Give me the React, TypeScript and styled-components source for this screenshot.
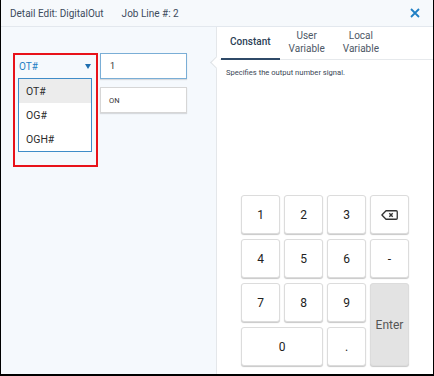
import React from "react";
import styled, { createGlobalStyle } from "styled-components";

const Global = createGlobalStyle`
  html, body { margin: 0; padding: 0; background: #fff; }
  body { font-family: Roboto, "Liberation Sans", sans-serif; }
  * { box-sizing: border-box; }
`;

const Frame = styled.div`
  width: 434px;
  height: 376px;
  display: flex;
  flex-direction: column;
  border-left: 1px solid #000;
  border-right: 1px solid #000;
  border-bottom: 2px solid #000;
  background: #f6f9fc;
  overflow: hidden;
`;

const Header = styled.div`
  height: 27px;
  flex: none;
  display: flex;
  align-items: center;
  padding: 0 0 0 9px;
  border-bottom: 1px solid #e3e8ee;
  color: #3d4b5c;
  font-size: 10px;
`;

const HeaderItem = styled.span<{ $gap?: number }>`
  margin-right: ${(p) => p.$gap ?? 0}px;
`;

const Close = styled.button`
  margin-left: auto;
  margin-right: 12px;
  width: 12px;
  height: 12px;
  padding: 0;
  border: 0;
  background: none;
  display: flex;
  align-items: center;
  justify-content: center;
`;

const Body = styled.div`
  flex: 1;
  display: flex;
  min-height: 0;
`;

const LeftPanel = styled.div`
  width: 216px;
  flex: none;
  background: #f5f9fd;
  border-right: 1px solid #e4e7ea;
  padding: 26px 0 0 12px;
  display: flex;
  align-items: flex-start;
  gap: 2px;
`;

const Highlight = styled.div`
  width: 85px;
  height: 114px;
  border: 2px solid #e8121a;
  padding: 0 4px 0 3px;
  display: flex;
  flex-direction: column;
`;

const SelectHead = styled.div`
  height: 23px;
  display: flex;
  align-items: center;
  justify-content: space-between;
  padding: 0 0 0 1px;
  color: #1f7fc4;
  font-size: 10px;
`;

const Caret = styled.span`
  width: 0;
  height: 0;
  border-left: 3.5px solid transparent;
  border-right: 3.5px solid transparent;
  border-top: 5px solid #1f6fb0;
  margin-right: 1px;
`;

const OptionList = styled.div`
  border: 1px solid #3e8cc8;
  background: #fff;
  display: flex;
  flex-direction: column;
`;

const Option = styled.div<{ $active?: boolean }>`
  height: 24px;
  display: flex;
  align-items: center;
  padding-left: 7px;
  font-size: 10.5px;
  color: #2c2c2c;
  background: ${(p) => (p.$active ? "#ececec" : "#fff")};
`;

const Fields = styled.div`
  display: flex;
  flex-direction: column;
  gap: 8px;
`;

const Field = styled.div<{ $focused?: boolean; $small?: boolean }>`
  width: 87px;
  height: 26px;
  background: #fff;
  border: 1px solid ${(p) => (p.$focused ? "#7aaed6" : "#d6d6d6")};
  box-shadow: 0 1px 1px rgba(0, 0, 0, 0.12);
  display: flex;
  align-items: center;
  padding-left: ${(p) => (p.$small ? 8 : 9)}px;
  font-size: ${(p) => (p.$small ? 7.5 : 9)}px;
  color: #333;
`;

const RightPanel = styled.div`
  flex: 1;
  background: #fff;
  position: relative;
  display: flex;
  flex-direction: column;
`;

const Pointer = styled.div`
  position: absolute;
  left: -5px;
  top: 31px;
  width: 9px;
  height: 9px;
  background: #fff;
  border-left: 1px solid #dde1e5;
  border-bottom: 1px solid #dde1e5;
  transform: rotate(45deg);
`;

const Tabs = styled.div`
  height: 33px;
  flex: none;
  display: flex;
  padding-left: 4px;
  border-bottom: 1px solid #e6e9ec;
`;

const Tab = styled.div<{ $active?: boolean }>`
  padding: 0 9px;
  min-width: 54px;
  display: flex;
  align-items: center;
  justify-content: center;
  text-align: center;
  font-size: 10px;
  line-height: 12.5px;
  color: ${(p) => (p.$active ? "#2b3e55" : "#4d5866")};
  font-weight: ${(p) => (p.$active ? 500 : 400)};
  border-bottom: 2px solid ${(p) => (p.$active ? "#2f4a68" : "transparent")};
  margin-bottom: -1px;
`;

const Description = styled.div`
  padding: 8px 0 0 9px;
  font-size: 7.6px;
  color: #3a4656;
`;

const Keypad = styled.div`
  margin: auto auto 8px;
  display: grid;
  grid-template-columns: repeat(4, 39px);
  grid-auto-rows: 39px;
  column-gap: 4px;
  row-gap: 5px;
`;

const Key = styled.button<{ $span?: number; $rows?: number; $muted?: boolean }>`
  grid-column: span ${(p) => p.$span ?? 1};
  grid-row: span ${(p) => p.$rows ?? 1};
  border: 1px solid #dcdcdc;
  border-radius: 3px;
  background: ${(p) => (p.$muted ? "#e3e3e3" : "#fff")};
  box-shadow: 0 1px 1px rgba(0, 0, 0, 0.22);
  font-family: Roboto, "Liberation Sans", sans-serif;
  font-size: 12px;
  color: ${(p) => (p.$muted ? "#555" : "#222")};
  display: flex;
  align-items: center;
  justify-content: center;
  padding: 0;
`;

const BackspaceIcon = () => (
  <svg width="17" height="10" viewBox="0 0 17 10">
    <path
      d="M5 0.75 H15.25 a1 1 0 0 1 1 1 V8.25 a1 1 0 0 1 -1 1 H5 L0.9 5 Z"
      fill="none"
      stroke="#333"
      strokeWidth="1.3"
      strokeLinejoin="round"
    />
    <path d="M8.3 3.3 L11.7 6.7 M11.7 3.3 L8.3 6.7" stroke="#333" strokeWidth="1.4" />
  </svg>
);

const CloseIcon = () => (
  <svg width="10" height="10" viewBox="0 0 10 10">
    <path d="M1 1 L9 9 M9 1 L1 9" stroke="#1f7fc4" strokeWidth="1.8" />
  </svg>
);

export default function App() {
  return (
    <>
      <Global />
      <Frame>
        <Header>
          <HeaderItem $gap={18}>Detail Edit: DigitalOut</HeaderItem>
          <HeaderItem>Job Line #: 2</HeaderItem>
          <Close aria-label="close">
            <CloseIcon />
          </Close>
        </Header>
        <Body>
          <LeftPanel>
            <Highlight>
              <SelectHead>
                <span>OT#</span>
                <Caret />
              </SelectHead>
              <OptionList>
                <Option $active>OT#</Option>
                <Option>OG#</Option>
                <Option>OGH#</Option>
              </OptionList>
            </Highlight>
            <Fields>
              <Field $focused>1</Field>
              <Field $small>ON</Field>
            </Fields>
          </LeftPanel>
          <RightPanel>
            <Pointer />
            <Tabs>
              <Tab $active>Constant</Tab>
              <Tab>
                User
                <br />
                Variable
              </Tab>
              <Tab>
                Local
                <br />
                Variable
              </Tab>
            </Tabs>
            <Description>Specifies the output number signal.</Description>
            <Keypad>
              <Key>1</Key>
              <Key>2</Key>
              <Key>3</Key>
              <Key aria-label="backspace">
                <BackspaceIcon />
              </Key>
              <Key>4</Key>
              <Key>5</Key>
              <Key>6</Key>
              <Key>-</Key>
              <Key>7</Key>
              <Key>8</Key>
              <Key>9</Key>
              <Key $rows={2} $muted>
                Enter
              </Key>
              <Key $span={2}>0</Key>
              <Key>.</Key>
            </Keypad>
          </RightPanel>
        </Body>
      </Frame>
    </>
  );
}
